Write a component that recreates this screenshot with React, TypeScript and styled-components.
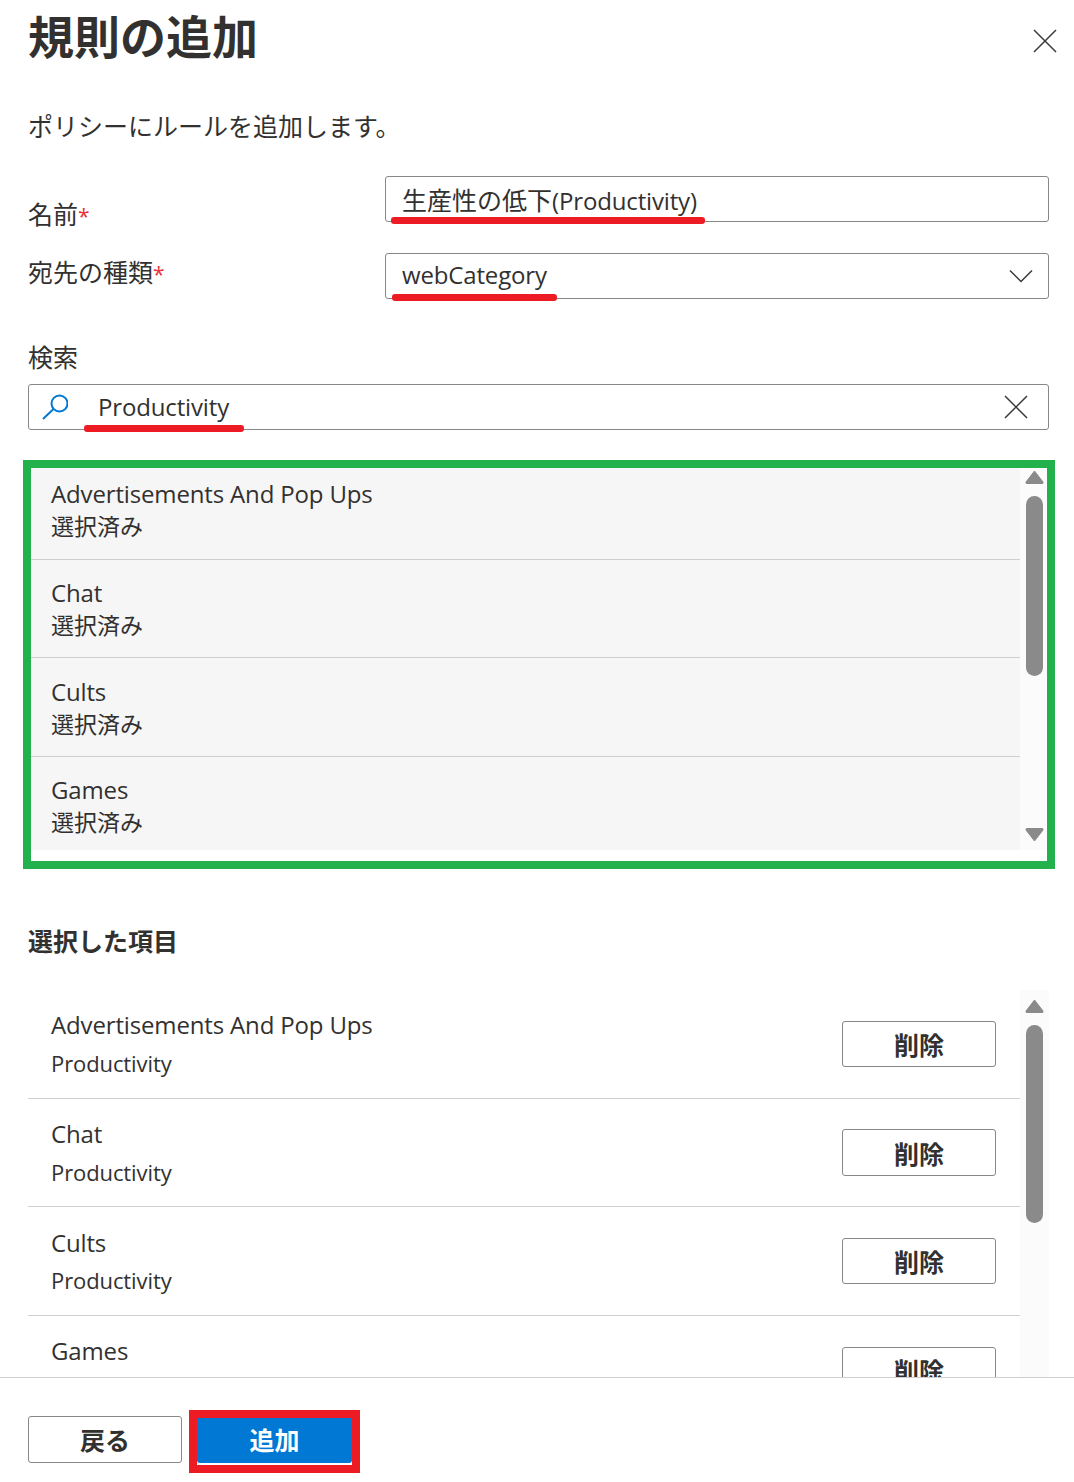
import React from 'react';
import styled, { createGlobalStyle } from 'styled-components';

const GlobalStyle = createGlobalStyle`
  html, body {
    margin: 0;
    padding: 0;
    background: #fff;
  }
  body {
    font-family: 'Open Sans', 'Noto Sans CJK JP', sans-serif;
    color: #323130;
  }
`;

const categories = ['Advertisements And Pop Ups', 'Chat', 'Cults', 'Games'];

const ScrollUp = () => (
  <svg width='19' height='14' viewBox='0 0 19 14'>
    <path d='M9.5 1 L18 12 Q18.5 13.5 17 13.5 H2 Q0.5 13.5 1 12 Z' fill='#8a8a8a' stroke='#8a8a8a' strokeLinejoin='round' />
  </svg>
);

const ScrollDown = () => (
  <svg width='19' height='14' viewBox='0 0 19 14'>
    <path d='M9.5 13 L18 2 Q18.5 0.5 17 0.5 H2 Q0.5 0.5 1 2 Z' fill='#8a8a8a' stroke='#8a8a8a' strokeLinejoin='round' />
  </svg>
);

const CrossIcon = () => (
  <svg width='24' height='24' viewBox='0 0 24 24'>
    <path d='M1 1 L23 23 M23 1 L1 23' stroke='#3b3a39' strokeWidth='1.5' fill='none' />
  </svg>
);

const App = () => {
  return (
    <Page>
      <GlobalStyle />
      <Body>
        <Header>
          <Title>規則の追加</Title>
          <CloseButton>
            <CrossIcon />
          </CloseButton>
        </Header>
        <Description>ポリシーにルールを追加します。</Description>

        <FieldRow>
          <FieldLabel $top={21}>
            名前<Required>*</Required>
          </FieldLabel>
          <InputBox>
            <InputText $nudge={2}>
              生産性の低下<Latin>(Productivity)</Latin>
            </InputText>
            <RedLine $left={5} $width={314} />
          </InputBox>
        </FieldRow>
        <FieldRow>
          <FieldLabel $top={2}>
            宛先の種類<Required>*</Required>
          </FieldLabel>
          <InputBox>
            <InputText $nudge={-4}>
              <Latin>webCategory</Latin>
            </InputText>
            <RedLine $left={6} $width={165} />
            <svg width='24' height='14' viewBox='0 0 24 14'>
              <path d='M1 1.5 L12 12.5 L23 1.5' stroke='#3b3a39' strokeWidth='1.5' fill='none' />
            </svg>
          </InputBox>
        </FieldRow>

        <SearchLabel>検索</SearchLabel>
        <SearchBox>
          <svg width='26' height='26' viewBox='0 0 26 26'>
            <circle cx='17.5' cy='9.5' r='8' stroke='#0078d4' strokeWidth='2' fill='none' />
            <path d='M11.5 15 L1 25' stroke='#0078d4' strokeWidth='2' fill='none' />
          </svg>
          <SearchText>Productivity</SearchText>
          <CrossIcon />
          <RedLine $left={55} $width={160} />
        </SearchBox>

        <GreenFrame>
          <ResultClip>
            <ResultList>
              {categories.map((name) => (
                <ResultRow key={name}>
                  <ItemName>{name}</ItemName>
                  <ItemSub>選択済み</ItemSub>
                </ResultRow>
              ))}
            </ResultList>
          </ResultClip>
          <ResultTrack>
            <ScrollUp />
            <ResultThumb />
            <TrackSpacer />
            <ScrollDown />
          </ResultTrack>
        </GreenFrame>

        <SectionTitle>選択した項目</SectionTitle>
        <SelectedArea>
          <SelectedList>
            {categories.map((name) => (
              <SelectedRow key={name}>
                <div>
                  <ItemName>{name}</ItemName>
                  <SelectedSub>Productivity</SelectedSub>
                </div>
                <DeleteButton>削除</DeleteButton>
              </SelectedRow>
            ))}
          </SelectedList>
          <SelectedTrack>
            <ScrollUp />
            <SelectedThumb />
          </SelectedTrack>
        </SelectedArea>
      </Body>
      <Footer>
        <BackButton>戻る</BackButton>
        <RedFrame>
          <AddButton>追加</AddButton>
        </RedFrame>
      </Footer>
    </Page>
  );
};

export default App;

const Page = styled.div`
  width: 1074px;
  height: 1482px;
  display: flex;
  flex-direction: column;
  overflow: hidden;
  background: #fff;
`;

const Body = styled.div`
  height: 1377px;
  padding: 0 25px 0 28px;
  box-sizing: border-box;
  overflow: hidden;
`;

const Header = styled.div`
  display: flex;
  justify-content: space-between;
  align-items: flex-start;
  height: 78px;
  margin-right: -8px;
`;

const Title = styled.h1`
  margin: 0;
  font-size: 46px;
  font-weight: 700;
  line-height: 73px;
`;

const CloseButton = styled.div`
  display: flex;
  margin-top: 29px;
`;

const Description = styled.p`
  margin: 31px 0 33px;
  font-size: 25px;
  line-height: 34px;
`;

const FieldRow = styled.div`
  display: grid;
  grid-template-columns: 357px 664px;
  height: 46px;
  margin-bottom: 31px;
`;

const FieldLabel = styled.div<{ $top: number }>`
  padding-top: ${({ $top }) => $top}px;
  font-size: 25px;
  line-height: 34px;
`;

const Required = styled.span`
  color: #e8323c;
  font-size: 21px;
`;

const InputBox = styled.div`
  position: relative;
  display: flex;
  align-items: center;
  justify-content: space-between;
  height: 46px;
  box-sizing: border-box;
  padding: 0 15px 0 16px;
  border: 1px solid #8a8886;
  border-radius: 3px;
`;

const InputText = styled.span<{ $nudge: number }>`
  margin-top: ${({ $nudge }) => $nudge}px;
  font-size: 25px;
  line-height: 34px;
`;

const Latin = styled.span`
  font-size: 24px;
  letter-spacing: -0.15px;
`;

const RedLine = styled.div<{ $left: number; $width: number }>`
  position: absolute;
  left: ${({ $left }) => $left}px;
  bottom: -3px;
  width: ${({ $width }) => $width}px;
  height: 7px;
  border-radius: 3px;
  background: #ed1c24;
`;

const SearchLabel = styled.div`
  margin-top: 41px;
  margin-bottom: 10px;
  font-size: 25px;
  line-height: 34px;
`;

const SearchBox = styled.div`
  position: relative;
  display: flex;
  align-items: center;
  height: 46px;
  box-sizing: border-box;
  padding: 0 20px 0 13px;
  border: 1px solid #8a8886;
  border-radius: 3px;
`;

const SearchText = styled.span`
  flex: 1;
  margin-left: 30px;
  font-size: 24px;
  letter-spacing: -0.15px;
  line-height: 34px;
`;

const GreenFrame = styled.div`
  display: flex;
  width: 1032px;
  height: 409px;
  box-sizing: border-box;
  margin: 30px 0 0 -5px;
  border: 8px solid #22b14c;
  background: #fff;
`;

const ResultClip = styled.div`
  flex: none;
  width: 989px;
  height: 382px;
  overflow: hidden;
  background: #f6f6f6;
`;

const ResultList = styled.div`
  margin-top: -7px;
`;

const ResultRow = styled.div`
  height: 98.67px;
  box-sizing: border-box;
  padding: 16.4px 20px 0;
  border-bottom: 1px solid #cfcfcf;
`;

const ItemName = styled.div`
  font-size: 24px;
  letter-spacing: -0.15px;
  line-height: 33px;
`;

const ItemSub = styled.div`
  font-size: 23px;
  line-height: 33px;
`;

const ResultTrack = styled.div`
  flex: none;
  display: flex;
  flex-direction: column;
  align-items: center;
  width: 27px;
  height: 382px;
  box-sizing: border-box;
  padding: 2px 0 8px 2px;
  background: #fbfbfb;
`;

const ResultThumb = styled.div`
  flex: none;
  width: 17px;
  height: 180px;
  margin-top: 12px;
  border-radius: 9px;
  background: #8a8a8a;
`;

const TrackSpacer = styled.div`
  flex: 1;
`;

const SectionTitle = styled.h2`
  margin: 55px 0 32px;
  font-size: 25px;
  font-weight: 700;
  line-height: 34px;
`;

const SelectedArea = styled.div`
  display: flex;
  height: 387px;
  overflow: hidden;
`;

const SelectedList = styled.div`
  flex: none;
  width: 992px;
`;

const SelectedRow = styled.div`
  display: flex;
  justify-content: space-between;
  align-items: flex-start;
  height: 108.67px;
  box-sizing: border-box;
  padding: 18.4px 24px 0 23px;
  border-bottom: 1px solid #cfcfcf;
`;

const SelectedSub = styled.div`
  margin-top: 5.6px;
  font-size: 22px;
  letter-spacing: -0.1px;
  line-height: 33px;
`;

const DeleteButton = styled.button`
  width: 154px;
  height: 46.4px;
  margin-top: 12.3px;
  padding: 0;
  border: 1px solid #8a8886;
  border-radius: 3px;
  background: #fff;
  color: #323130;
  font-family: inherit;
  font-size: 25px;
  font-weight: 700;
`;

const SelectedTrack = styled.div`
  flex: none;
  display: flex;
  flex-direction: column;
  align-items: center;
  width: 29px;
  padding-top: 9px;
  box-sizing: border-box;
  background: #fbfbfb;
`;

const SelectedThumb = styled.div`
  flex: none;
  width: 17px;
  height: 198px;
  margin-top: 12px;
  border-radius: 9px;
  background: #8a8a8a;
`;

const Footer = styled.div`
  display: flex;
  align-items: flex-start;
  gap: 7px;
  height: 105px;
  box-sizing: border-box;
  padding: 32px 0 0 28px;
  border-top: 1px solid #d2d0ce;
`;

const BackButton = styled.button`
  width: 154px;
  height: 47px;
  margin-top: 6px;
  padding: 0 0 2px;
  border: 1px solid #8a8886;
  border-radius: 3px;
  background: #fff;
  color: #323130;
  font-family: inherit;
  font-size: 25px;
  font-weight: 700;
`;

const RedFrame = styled.div`
  width: 171px;
  height: 63px;
  box-sizing: border-box;
  border: 8px solid #ed1c24;
  background: #fff;
`;

const AddButton = styled.button`
  display: block;
  width: 155px;
  height: 45px;
  padding: 0 0 3px;
  border: none;
  border-radius: 0 0 3px 3px;
  background: #0078d4;
  color: #fff;
  font-family: inherit;
  font-size: 25px;
  font-weight: 700;
`;
